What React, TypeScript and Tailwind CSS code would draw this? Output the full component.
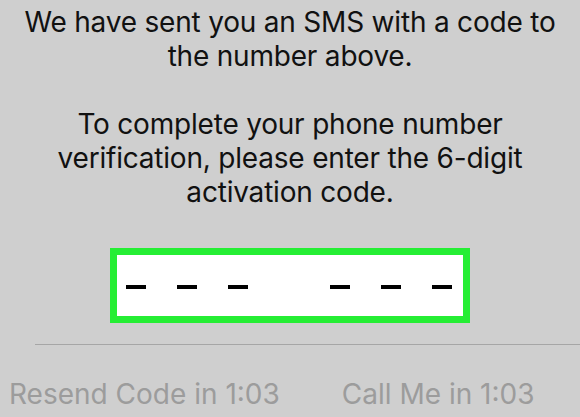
export default function App() {
  const font = { fontFamily: "Inter, 'Liberation Sans', sans-serif" };
  return (
    <div
      className="w-[580px] h-[417px] bg-[#cfcfcf] overflow-hidden flex flex-col"
      style={font}
    >
      <div className="pt-[5px] text-center text-[28px] leading-[34px] text-[#111] tracking-[-0.2px]">
        <div>We have sent you an SMS with a code to</div>
        <div>the number above.</div>
        <div className="h-[34px]" />
        <div>To complete your phone number</div>
        <div>verification, please enter the 6-digit</div>
        <div>activation code.</div>
      </div>

      <div className="mt-[39px] ml-[110px] w-[360px] h-[75px] border-[7px] border-[#25ee34] bg-white flex items-center pl-[9px] pt-[2px]">
        <div className="flex gap-[31px]">
          <div className="w-[20px] h-[4px] bg-black" />
          <div className="w-[20px] h-[4px] bg-black" />
          <div className="w-[20px] h-[4px] bg-black" />
        </div>
        <div className="flex gap-[31px] ml-[82px]">
          <div className="w-[20px] h-[4px] bg-black" />
          <div className="w-[20px] h-[4px] bg-black" />
          <div className="w-[20px] h-[4px] bg-black" />
        </div>
      </div>

      <div className="mt-[21px] ml-[35px] h-px bg-[#a6a6a6]" />

      <div className="flex items-center mt-[32px] pl-[9px] text-[28px] leading-[34px] text-[#9c9c9c]">
        <span>Resend Code in 1:03</span>
        <span className="ml-[62px]">Call Me in 1:03</span>
      </div>
    </div>
  );
}
